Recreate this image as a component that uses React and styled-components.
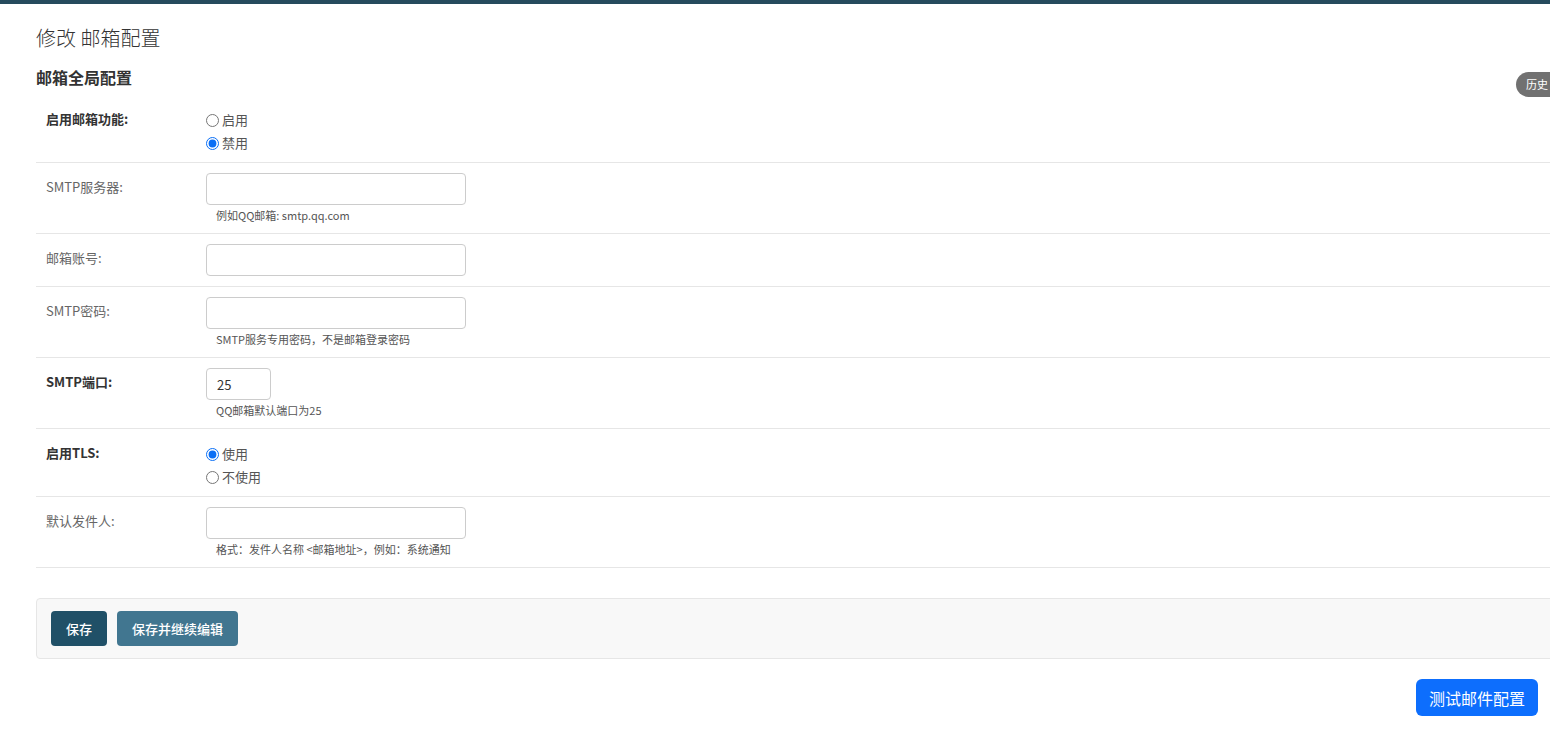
import React from 'react';
import styled, { createGlobalStyle } from 'styled-components';

const GlobalStyle = createGlobalStyle`
  html, body {
    margin: 0;
    padding: 0;
    background: #fff;
    overflow-x: hidden;
  }
  body {
    font-family: "Noto Sans CJK SC", "Liberation Sans", sans-serif;
    font-size: 13px;
    color: #333;
  }
`;

const TopBar = styled.div`
  height: 4px;
  background: #264b5d;
`;

const Content = styled.div`
  position: relative;
  width: 1560px;
  margin-left: 36px;
`;

const Title = styled.h1`
  margin: 0;
  padding-top: 21px;
  font-size: 20px;
  font-weight: 300;
  line-height: 26px;
  color: #333;
`;

const SectionTitle = styled.h2`
  margin: 0;
  padding-top: 14px;
  font-size: 16px;
  font-weight: 700;
  line-height: 24px;
  color: #333;
`;

const HistoryLink = styled.a`
  position: absolute;
  top: 68px;
  left: 1480px;
  height: 25px;
  padding: 0 14px 0 10px;
  border-radius: 13px;
  background: #717171;
  color: #fff;
  font-size: 11px;
  line-height: 25px;
  text-decoration: none;
`;

const Fieldset = styled.div`
  margin-top: 6px;
`;

const Row = styled.div`
  display: flex;
  padding: 10px;
  border-bottom: 1px solid #e6e6e6;
`;

const Label = styled.label`
  width: 160px;
  flex-shrink: 0;
  padding-top: 4px;
  line-height: 20px;
  font-size: 13px;
  color: ${(p) => (p.$required ? '#333' : '#666')};
  font-weight: ${(p) => (p.$required ? 700 : 400)};
`;

const Field = styled.div`
  display: flex;
  flex-direction: column;
`;

const TextInput = styled.input`
  box-sizing: border-box;
  width: ${(p) => p.$width || 260}px;
  height: 32px;
  padding: 0 10px;
  border: 1px solid #ccc;
  border-radius: 4px;
  font-family: inherit;
  font-size: 13px;
  color: #333;
  outline: none;
`;

const Help = styled.div`
  padding: 3px 0 0 10px;
  font-size: 11px;
  line-height: 15px;
  color: #555;
`;

const RadioList = styled.ul`
  list-style: none;
  margin: 0 0 -2px;
  padding: 3px 0 0;
`;

const RadioItem = styled.li`
  height: 23px;
  display: flex;
  align-items: center;
  font-size: 13px;
  color: #555;
`;

const Radio = styled.input`
  width: 13px;
  height: 13px;
  margin: 2px 3px 0 0;
  accent-color: #0b6ff5;
`;

const SubmitRow = styled.div`
  display: flex;
  gap: 10px;
  margin-top: 30px;
  padding: 12px 14px;
  background: #f8f8f8;
  border: 1px solid #e6e6e6;
  border-radius: 4px;
`;

const Button = styled.button`
  height: 35px;
  padding: 0 15px;
  border: none;
  border-radius: 4px;
  background: ${(p) => (p.$primary ? '#205067' : '#417690')};
  color: #fff;
  font-family: inherit;
  font-size: 13px;
  font-weight: 500;
  cursor: pointer;
`;

const TestRow = styled.div`
  display: flex;
  justify-content: flex-end;
  padding: 20px 12px 0 0;
`;

const TestButton = styled.button`
  height: 37px;
  padding: 0 13px;
  border: none;
  border-radius: 6px;
  background: #0d6efd;
  color: #fff;
  font-family: inherit;
  font-size: 16px;
  cursor: pointer;
`;

function RadioGroup({ name, options, checked }) {
  return (
    <RadioList>
      {options.map((opt) => (
        <RadioItem key={opt}>
          <Radio type="radio" name={name} defaultChecked={opt === checked} />
          {opt}
        </RadioItem>
      ))}
    </RadioList>
  );
}

export default function App() {
  return (
    <>
      <GlobalStyle />
      <TopBar />
      <Content>
        <Title>修改 邮箱配置</Title>
        <HistoryLink href="#">历史</HistoryLink>
        <SectionTitle>邮箱全局配置</SectionTitle>
        <Fieldset>
          <Row>
            <Label $required>启用邮箱功能:</Label>
            <RadioGroup name="enabled" options={['启用', '禁用']} checked="禁用" />
          </Row>
          <Row>
            <Label>SMTP服务器:</Label>
            <Field>
              <TextInput />
              <Help>例如QQ邮箱: smtp.qq.com</Help>
            </Field>
          </Row>
          <Row>
            <Label>邮箱账号:</Label>
            <Field>
              <TextInput />
            </Field>
          </Row>
          <Row>
            <Label>SMTP密码:</Label>
            <Field>
              <TextInput type="password" />
              <Help>SMTP服务专用密码，不是邮箱登录密码</Help>
            </Field>
          </Row>
          <Row>
            <Label $required>SMTP端口:</Label>
            <Field>
              <TextInput $width={65} defaultValue="25" />
              <Help>QQ邮箱默认端口为25</Help>
            </Field>
          </Row>
          <Row>
            <Label $required>启用TLS:</Label>
            <RadioGroup name="tls" options={['使用', '不使用']} checked="使用" />
          </Row>
          <Row>
            <Label>默认发件人:</Label>
            <Field>
              <TextInput />
              <Help>格式：发件人名称 &lt;邮箱地址&gt;，例如：系统通知</Help>
            </Field>
          </Row>
        </Fieldset>
        <SubmitRow>
          <Button $primary>保存</Button>
          <Button>保存并继续编辑</Button>
        </SubmitRow>
      </Content>
      <TestRow>
        <TestButton>测试邮件配置</TestButton>
      </TestRow>
    </>
  );
}
